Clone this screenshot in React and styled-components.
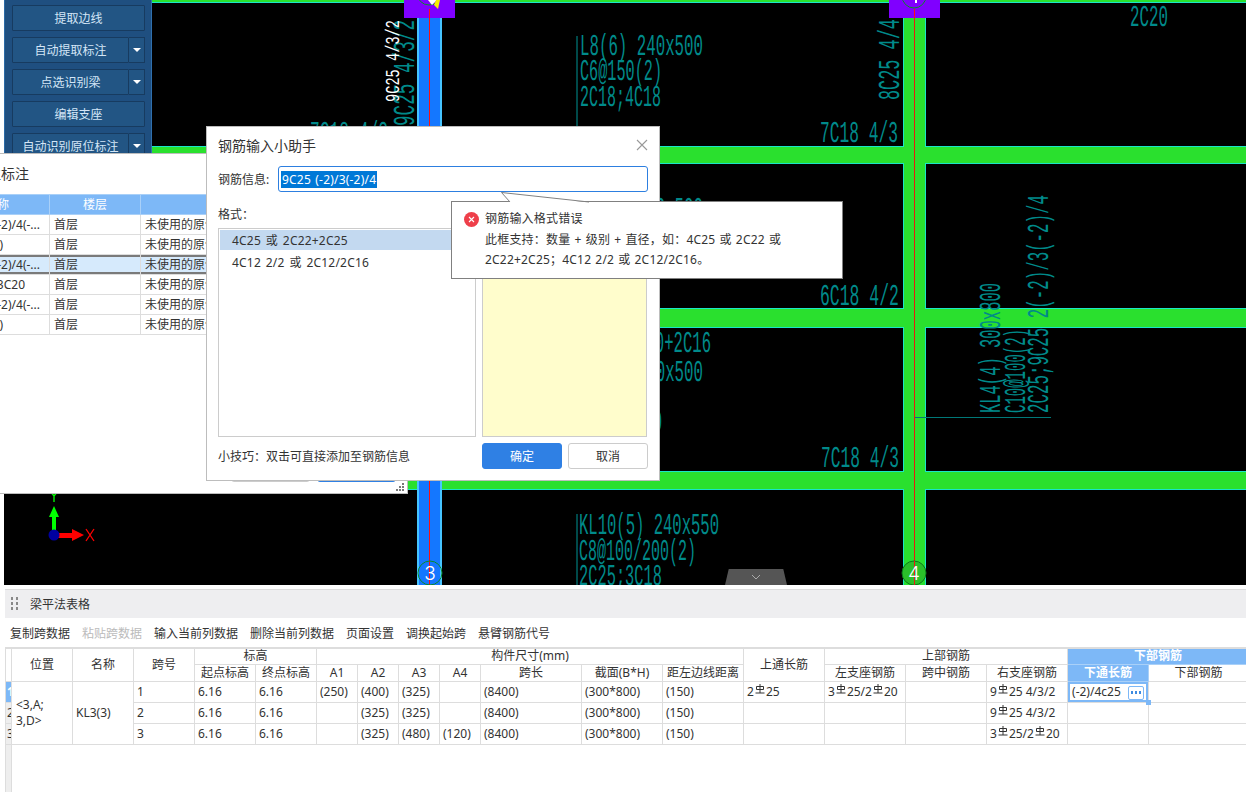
import React from 'react'
import styled, { createGlobalStyle } from 'styled-components'

const GlobalStyle = createGlobalStyle`
  html, body {
    margin: 0;
    padding: 0;
    width: 1246px;
    height: 792px;
    overflow: hidden;
    background: #fff;
    color: #333;
    font-family: "Noto Sans", "Noto Sans CJK SC", sans-serif;
    font-size: 12px;
  }
  * { box-sizing: border-box; }
`

const Page = styled.div`
  position: relative;
  width: 1246px;
  height: 792px;
  overflow: hidden;
`

/* ---------- cad canvas ---------- */

const Workspace = styled.div`
  position: relative;
  margin-left: 4px;
  height: 585px;
  background: #000;
`

const CadSvg = styled.svg`
  display: block;
`

const CadLabel = styled.text`
  font-family: "Liberation Mono", monospace;
  font-weight: 400;
  text-rendering: geometricPrecision;
  fill: ${props => props.$color || '#008a8a'};
`

const AxisNumber = styled.text`
  font-family: Inter, "Liberation Sans", sans-serif;
  font-weight: 300;
  font-size: 19px;
  fill: #fff;
  text-anchor: middle;
`

const Sidebar = styled.div`
  position: absolute;
  left: 0;
  top: 0;
  width: 148px;
  height: 153px;
  overflow: hidden;
  display: flex;
  flex-direction: column;
  gap: 6px;
  padding: 5px 6px 0 8px;
  background: #1f4f80;
  border-left: 1px solid #2b6aa6;
  border-right: 1px solid #2f6fae;
`

const SideButton = styled.div`
  display: flex;
  flex: none;
  height: 26px;
  margin-left: -1px;
`

const SideLabel = styled.div`
  flex: 1;
  display: flex;
  align-items: center;
  justify-content: center;
  background: #225584;
  border: 1px solid #173b60;
  border-radius: 1px;
  color: #d4e6f7;
  white-space: nowrap;
`

const SideCaret = styled.div`
  flex: none;
  width: 16px;
  display: flex;
  align-items: center;
  justify-content: center;
  background: #225584;
  border: 1px solid #173b60;
  border-left: none;

  &::after {
    content: '';
    border-left: 4px solid transparent;
    border-right: 4px solid transparent;
    border-top: 4px solid #fff;
  }
`

const CollapseTab = styled.div`
  position: absolute;
  left: 721px;
  bottom: 0;
  width: 62px;
  height: 16px;
  display: flex;
  align-items: center;
  justify-content: center;
  background: #555;
  clip-path: polygon(6% 0, 94% 0, 100% 100%, 0 100%);
`

/* ---------- table dialog behind ---------- */

const ListDialog = styled.div`
  position: absolute;
  left: -60px;
  top: 153px;
  width: 468px;
  height: 341px;
  display: flex;
  flex-direction: column;
  background: #fff;
  border: 1px solid #bdbdbd;
`

const ListTitle = styled.div`
  height: 40px;
  flex: none;
  padding: 0 0 3px 4px;
  display: flex;
  align-items: center;
  font-size: 14px;
`

const ListTable = styled.table`
  border-collapse: collapse;
  table-layout: fixed;
  width: 100%;
`

const ListHead = styled.th`
  height: 20px;
  padding: 0 ${props => props.$end || 0}px 1px 0;
  line-height: 17px;
  background: #7db8f7;
  color: #fff;
  font-weight: 400;
  border: 1px solid #a9d0f8;
  text-align: ${props => props.$end ? 'right' : 'center'};
`

const ListCell = styled.td`
  height: 20px;
  padding: 0 ${props => props.$end || 4}px 1px 4px;
  line-height: 17px;
  border: 1px solid #ddd;
  white-space: nowrap;
  overflow: hidden;
  text-align: ${props => props.$end ? 'right' : 'left'};
  background: ${props => props.$active ? '#d6eafc' : '#fff'};
  box-shadow: ${props => props.$active ? 'inset 0 2px #7a7a7a, inset 0 -2px #7a7a7a' : 'none'};
`

const ListFooter = styled.div`
  margin-top: auto;
  padding: 0 11px 11px 0;
  display: flex;
  justify-content: flex-end;
  gap: 7px;
`

const HiddenButton = styled.div`
  width: 79px;
  height: 26px;
  border-radius: 3px;
  background: ${props => props.$primary ? '#2f80e4' : '#fff'};
  border: 1px solid ${props => props.$primary ? '#2f80e4' : '#ccc'};
`

const Grip = styled.svg`
  position: absolute;
  right: 3px;
  bottom: 2px;
`

/* ---------- helper dialog ---------- */

const HelperDialog = styled.div`
  position: absolute;
  left: 206px;
  top: 126px;
  width: 454px;
  height: 355px;
  display: flex;
  flex-direction: column;
  padding: 0 11px;
  background: #fff;
  border: 1px solid #bdbdbd;
`

const HelperTitle = styled.div`
  flex: none;
  height: 39px;
  padding: 0 0 3px;
  display: flex;
  align-items: center;
  justify-content: space-between;
  font-size: 14px;
`

const InfoRow = styled.div`
  flex: none;
  height: 26px;
  display: flex;
  align-items: center;
`

const InfoLabel = styled.div`
  flex: none;
  width: 60px;
`

const InfoInput = styled.div`
  flex: 1;
  height: 26px;
  padding-left: 2px;
  display: flex;
  align-items: center;
  border: 1px solid #2d7fe0;
  border-radius: 3px;
`

const Selected = styled.span`
  padding: 0 1px;
  line-height: 17px;
  background: #0078d7;
  color: #fff;
  letter-spacing: 0.2px;
  word-spacing: 1px;
`

const FormatLabel = styled.div`
  flex: none;
  height: 36px;
  padding-top: 14px;
  line-height: 18px;
`

const Panes = styled.div`
  flex: none;
  height: 209px;
  display: grid;
  grid-template-columns: 258px 165px;
  gap: 6px;
`

const FormatList = styled.div`
  padding: 1px;
  border: 1px solid #ccc;
`

const FormatItem = styled.div`
  height: ${props => props.$active ? 20 : 24}px;
  padding-left: 12px;
  display: flex;
  align-items: center;
  letter-spacing: 0.2px;
  word-spacing: 1.5px;
  background: ${props => props.$active ? '#c3d9f0' : 'transparent'};
`

const NotePane = styled.div`
  background: #fffdcc;
  border: 1px solid #ccc;
`

const HelperFooter = styled.div`
  flex: none;
  margin-top: 6px;
  height: 26px;
  display: flex;
  align-items: center;
  gap: 6px;
`

const Tip = styled.div`
  flex: 1;
`

const DialogButton = styled.div`
  width: 80px;
  height: 26px;
  display: flex;
  align-items: center;
  justify-content: center;
  border-radius: 3px;
  background: ${props => props.$primary ? '#2f80e4' : '#fff'};
  color: ${props => props.$primary ? '#fff' : '#333'};
  border: 1px solid ${props => props.$primary ? '#2f80e4' : '#ccc'};
`

/* ---------- error tooltip ---------- */

const ErrorTip = styled.div`
  position: absolute;
  left: 451px;
  top: 201px;
  width: 392px;
  height: 78px;
  display: flex;
  gap: 6px;
  padding: 7px 0 0 12px;
  background: #fff;
  border: 1px solid #808080;
`

const TipArrow = styled.svg`
  position: absolute;
  left: 49px;
  top: -10px;
`

const TipIcon = styled.svg`
  flex: none;
  margin-top: 3px;
`

const TipText = styled.div`
  line-height: 20.5px;
  letter-spacing: 0.2px;
  word-spacing: 0.8px;
`

/* ---------- bottom table panel ---------- */

const TablePanel = styled.div`
  margin-left: 5px;
  padding-top: 4px;
`

const PanelHeader = styled.div`
  height: 29px;
  display: flex;
  align-items: center;
  gap: 12px;
  padding-left: 6px;
  background: #eeeef0;
  border-top: 1px solid #ddd;
`

const Toolbar = styled.div`
  height: 29px;
  display: flex;
  align-items: center;
  gap: 12px;
  padding-left: 5px;
`

const ToolItem = styled.div`
  color: ${props => props.$disabled ? '#bbb' : '#333'};
  white-space: nowrap;
`

const BeamTable = styled.table`
  border-collapse: collapse;
  table-layout: fixed;
  width: 1244px;
  border-top: 2px solid #ddd;
`

const HeadCell = styled.th`
  padding: 0;
  height: ${props => props.$short ? 16 : 17}px;
  font-weight: ${props => props.$active ? 700 : 400};
  line-height: 14px;
  border: 1px solid #ddd;
  white-space: nowrap;
  background: ${props => props.$active ? '#7db8f7' : '#fff'};
  color: ${props => props.$active ? '#fff' : '#333'};
  ${props => props.$active ? 'border-color: #a9d0f8;' : ''}
`

const RowNumber = styled.td`
  padding: 0 0 0 1px;
  overflow: hidden;
  border: 1px solid #ddd;
  background: ${props => props.$active ? '#7db8f7' : '#eee'};
  color: ${props => props.$active ? '#fff' : '#333'};
  font-weight: ${props => props.$active ? 700 : 400};
`

const DataCell = styled.td`
  height: 21px;
  padding: 0 0 0 3px;
  border: 1px solid #ddd;
  white-space: nowrap;
  overflow: hidden;
`

const MergedCell = styled(DataCell)`
  white-space: pre-line;
  line-height: 16px;
  padding-left: ${props => props.$pad || 3}px;
`

const ActiveCell = styled.td`
  position: relative;
  padding: 0 0 0 4px;
  border: 1px solid #ddd;
  box-shadow: inset 0 0 0 2px #7db8f7;
  white-space: nowrap;

  &::after {
    content: '';
    position: absolute;
    right: -3px;
    bottom: -3px;
    width: 5px;
    height: 5px;
    background: #7db8f7;
  }
`

const MoreButton = styled.span`
  position: absolute;
  right: 4px;
  top: 4px;
  width: 16px;
  height: 14px;
  display: flex;
  align-items: center;
  justify-content: center;
  gap: 1.5px;
  border: 1px solid #7db8f7;
  border-radius: 2px;
`

const MoreDot = styled.i`
  width: 2.5px;
  height: 2.5px;
  background: #3d8be0;
`

const FillerGutter = styled.td`
  height: 48px;
  padding: 0;
  background: #eee;
  border: 1px solid #ddd;
  border-bottom: none;
`

const RebarSvg = styled.svg`
  vertical-align: 2px;
  margin: 0 1px;
`

const Rebar = () => (
  <RebarSvg width="10" height="10" viewBox="0 0 10 10" fill="none" stroke="#333" strokeWidth="1">
    <path d="M5 0v9M1.5 2.5h7v3h-7zM0.5 9h9" />
  </RebarSvg>
)

const RebarText = ({ value }) => {
  const parts = value.split('*')
  return parts.map((part, i) => (
    <React.Fragment key={i}>
      {i > 0 && <Rebar />}
      {part}
    </React.Fragment>
  ))
}

/* ---------- data ---------- */

const SIDE_BUTTONS = [
  { label: '提取边线' },
  { label: '自动提取标注', caret: true },
  { label: '点选识别梁', caret: true },
  { label: '编辑支座' },
  { label: '自动识别原位标注', caret: true },
]

const ISSUES = [
  { name: '(-2)/3(-2)/4(-...', end: 9 },
  { name: '(2C20)', end: 46 },
  { name: '(-2)/3(-2)/4(-...', end: 9, active: true },
  { name: '2C25;3C20', end: 24 },
  { name: '(-2)/3(-2)/4(-...', end: 9 },
  { name: '(2C20)', end: 46 },
]

const TOOLS = ['复制跨数据', '粘贴跨数据', '输入当前列数据', '删除当前列数据', '页面设置', '调换起始跨', '悬臂钢筋代号']

const COLUMN_WIDTHS = [6, 61, 61, 61, 61, 61, 41, 41, 41, 41, 101, 81, 81, 81, 81, 81, 81, 81, 100]

const SPANS = [
  { no: 1, from: '6.16', to: '6.16', a: ['(250)', '(400)', '(325)', ''], top: '2*25', left: '3*25/2*20', right: '9*25 4/3/2' },
  { no: 2, from: '6.16', to: '6.16', a: ['', '(325)', '(325)', ''], top: '', left: '', right: '9*25 4/3/2' },
  { no: 3, from: '6.16', to: '6.16', a: ['', '(325)', '(480)', '(120)'], top: '', left: '', right: '3*25/2*20' },
]

const LABELS = [
  { t: '7C18 4/3', x: 310, y: 142, len: 78 },
  { t: 'L8(6) 240x500', x: 580, y: 55, len: 123 },
  { t: 'C6@150(2)', x: 580, y: 80, len: 82 },
  { t: '2C18;4C18', x: 580, y: 106, len: 81 },
  { t: '2C20', x: 1130, y: 26, len: 38 },
  { t: '7C18 4/3', x: 820, y: 142, len: 78 },
  { t: '6C18 4/2', x: 820, y: 305, len: 79 },
  { t: '7C18 4/3', x: 821, y: 467, len: 78 },
  { t: 'L8(4) 240x500', x: 580, y: 218, len: 123 },
  { t: '2C20;4C20+2C16', x: 580, y: 352, len: 131 },
  { t: 'L8(6) 240x500', x: 580, y: 381, len: 123 },
  { t: 'C8@100(2)', x: 580, y: 406, len: 82 },
  { t: '2C18;4C20', x: 580, y: 431, len: 82 },
  { t: 'KL10(5) 240x550', x: 579, y: 534, len: 140 },
  { t: 'C8@100/200(2)', x: 579, y: 560, len: 117 },
  { t: '2C25;3C18', x: 579, y: 585, len: 83 },
  { t: '9C25 4/3/2', x: 414, y: 126, len: 106, rot: true },
  { t: '9C25 4/3/2', x: 399, y: 102, len: 82, h: 13, color: '#fff' },
  { t: '8C25 4/4', x: 899, y: 100, len: 81, rot: true },
  { t: 'KL4(4) 300x800', x: 1000, y: 413, len: 130, rot: true },
  { t: 'C10@100(2)', x: 1025, y: 413, len: 84, rot: true },
  { t: '2C25;9C25 2(-2)/3(-2)/4', x: 1048, y: 413, len: 218, rot: true },
]

const H_BEAMS = [
  { y: -2, h: 5, x: 152 },
  { y: 146, h: 18, x: 152 },
  { y: 308, h: 20, x: 442 },
  { y: 471, h: 19, x: 152 },
]

const Drawing = () => (
  <CadSvg width="1242" height="585" viewBox="4 0 1242 585">
    {H_BEAMS.map(b => (
      <rect key={b.y} x={b.x} y={b.y} width={1246 - b.x} height={b.h} fill="#19e6c8" />
    ))}
    <rect x="903" y="0" width="23" height="585" fill="#19e6c8" />
    {H_BEAMS.map(b => (
      <rect key={b.y} x={b.x} y={b.y + 1} width={1246 - b.x} height={b.h - 2} fill="#2ae02e" />
    ))}
    <rect x="904" y="0" width="21" height="585" fill="#2ae02e" />

    <rect x="417" y="0" width="25" height="585" fill="#46c4ff" />
    <rect x="419" y="0" width="21" height="585" fill="#1477ff" />
    <rect x="429" y="17" width="1" height="568" fill="#ff1010" />
    <rect x="914" y="17" width="1" height="568" fill="#e81a10" />

    <path d="M577 36v90M577 514v71" stroke="#006a6a" strokeWidth="1.4" fill="none" />
    <path d="M915 417.5h136" stroke="#007878" strokeWidth="1" fill="none" />

    {LABELS.map(l => {
      const h = l.h || 20
      return (
        <CadLabel
          key={`${l.t}${l.x}${l.y}`}
          x={l.x}
          y={l.y}
          $color={l.color}
          fontSize={h / 0.66}
          textLength={l.len}
          lengthAdjust="spacingAndGlyphs"
          transform={l.rot || l.color ? `rotate(-90 ${l.x} ${l.y})` : undefined}
        >
          {l.t}
        </CadLabel>
      )
    })}

    <rect x="404" y="0" width="51" height="18" fill="#8000ff" />
    <rect x="889" y="0" width="51" height="18" fill="#8000ff" />
    <circle cx="429" cy="-7" r="12" fill="none" stroke="#0a8a2a" />
    <path d="M428 0h9l-5 5z" fill="#fff" />
    <path d="M436 0h4l-2 9-4-4z" fill="#f7f000" />
    <circle cx="914" cy="-4" r="12" fill="none" stroke="#0a8a2a" />
    <rect x="915" y="0" width="2" height="3" fill="#fff" />
    <rect x="429" y="9" width="1" height="9" fill="#ff1010" />
    <rect x="914" y="9" width="1" height="9" fill="#ff1010" />

    <circle cx="430" cy="573" r="12" fill="none" stroke="#0a8a2a" />
    <AxisNumber x="430" y="580">3</AxisNumber>
    <circle cx="914" cy="573" r="12" fill="#2ac02a" stroke="#0a7a1a" />
    <rect x="914" y="561" width="1" height="24" fill="#e81a10" />
    <AxisNumber x="914" y="580">4</AxisNumber>

    <rect x="52" y="516" width="4" height="16" fill="#00ff00" />
    <path d="M54 506l5 11h-10z" fill="#00ff00" />
    <path d="M49 490l5 6 5-6M54 496v6" stroke="#00ff00" strokeWidth="1.3" fill="none" />
    <rect x="58" y="533" width="15" height="5" fill="#ff0000" />
    <path d="M84 535l-12-6v12z" fill="#ff0000" />
    <path d="M86 529l8 12M94 529l-8 12" stroke="#ff0000" strokeWidth="1.3" fill="none" />
    <circle cx="54" cy="535" r="5.5" fill="#0000a0" />
  </CadSvg>
)

const App = () => (
  <Page>
    <GlobalStyle />

    <Workspace>
      <Drawing />
      <Sidebar>
        {SIDE_BUTTONS.map(b => (
          <SideButton key={b.label}>
            <SideLabel>{b.label}</SideLabel>
            {b.caret && <SideCaret />}
          </SideButton>
        ))}
      </Sidebar>
      <CollapseTab>
        <svg width="10" height="6" viewBox="0 0 10 6" fill="none" stroke="#aaa" strokeWidth="1">
          <path d="M1 1l4 4 4-4" />
        </svg>
      </CollapseTab>
    </Workspace>

    <TablePanel>
      <PanelHeader>
        <svg width="7" height="14" viewBox="0 0 7 14" fill="#888">
          {[0, 5, 10].map(y => (
            <React.Fragment key={y}>
              <rect x="0" y={y} width="2" height="3" />
              <rect x="5" y={y} width="2" height="3" />
            </React.Fragment>
          ))}
        </svg>
        梁平法表格
      </PanelHeader>
      <Toolbar>
        {TOOLS.map((tool, i) => (
          <ToolItem key={tool} $disabled={i === 1}>{tool}</ToolItem>
        ))}
      </Toolbar>
      <BeamTable>
        <colgroup>
          {COLUMN_WIDTHS.map((w, i) => <col key={i} width={w} />)}
        </colgroup>
        <thead>
          <tr>
            <HeadCell $short rowSpan={2} />
            <HeadCell $short rowSpan={2}>位置</HeadCell>
            <HeadCell $short rowSpan={2}>名称</HeadCell>
            <HeadCell $short rowSpan={2}>跨号</HeadCell>
            <HeadCell $short colSpan={2}>标高</HeadCell>
            <HeadCell $short colSpan={7}>构件尺寸(mm)</HeadCell>
            <HeadCell $short rowSpan={2}>上通长筋</HeadCell>
            <HeadCell $short colSpan={3}>上部钢筋</HeadCell>
            <HeadCell $short colSpan={2} $active>下部钢筋</HeadCell>
          </tr>
          <tr>
            {['起点标高', '终点标高', 'A1', 'A2', 'A3', 'A4', '跨长', '截面(B*H)', '距左边线距离', '左支座钢筋', '跨中钢筋', '右支座钢筋'].map(h => (
              <HeadCell key={h}>{h}</HeadCell>
            ))}
            <HeadCell $active>下通长筋</HeadCell>
            <HeadCell>下部钢筋</HeadCell>
          </tr>
        </thead>
        <tbody>
          {SPANS.map((span, i) => (
            <tr key={span.no}>
              <RowNumber $active={i === 0}>{span.no}</RowNumber>
              {i === 0 && <MergedCell rowSpan={3} $pad={4}>{'<3,A;\n3,D>'}</MergedCell>}
              {i === 0 && <MergedCell rowSpan={3}>KL3(3)</MergedCell>}
              <DataCell>{span.no}</DataCell>
              <DataCell>{span.from}</DataCell>
              <DataCell>{span.to}</DataCell>
              {span.a.map((v, j) => <DataCell key={j}>{v}</DataCell>)}
              <DataCell>(8400)</DataCell>
              <DataCell>(300*800)</DataCell>
              <DataCell>(150)</DataCell>
              <DataCell><RebarText value={span.top} /></DataCell>
              <DataCell><RebarText value={span.left} /></DataCell>
              <DataCell />
              <DataCell><RebarText value={span.right} /></DataCell>
              {i === 0 ? (
                <ActiveCell>
                  (-2)/4c25
                  <MoreButton><MoreDot /><MoreDot /><MoreDot /></MoreButton>
                </ActiveCell>
              ) : <DataCell />}
              <DataCell />
            </tr>
          ))}
          <tr><FillerGutter /></tr>
        </tbody>
      </BeamTable>
    </TablePanel>

    <ListDialog>
      <ListTitle>校核原位标注</ListTitle>
      <ListTable>
        <colgroup>
          <col width="108" />
          <col width="91" />
          <col />
        </colgroup>
        <thead>
          <tr>
            <ListHead $end={40}>名称</ListHead>
            <ListHead>楼层</ListHead>
            <ListHead />
          </tr>
        </thead>
        <tbody>
          {ISSUES.map((row, i) => (
            <tr key={i}>
              <ListCell $end={row.end} $active={row.active}>{row.name}</ListCell>
              <ListCell $active={row.active}>首层</ListCell>
              <ListCell $active={row.active}>未使用的原位标注</ListCell>
            </tr>
          ))}
        </tbody>
      </ListTable>
      <ListFooter>
        <HiddenButton />
        <HiddenButton $primary />
      </ListFooter>
      <Grip width="8" height="8" viewBox="0 0 8 8" fill="#777">
        <rect x="6" y="0" width="2" height="2" />
        <rect x="3" y="3" width="2" height="2" />
        <rect x="6" y="3" width="2" height="2" />
        <rect x="0" y="6" width="2" height="2" />
        <rect x="3" y="6" width="2" height="2" />
        <rect x="6" y="6" width="2" height="2" />
      </Grip>
    </ListDialog>

    <HelperDialog>
      <HelperTitle>
        钢筋输入小助手
        <svg width="12" height="12" viewBox="0 0 12 12" stroke="#999" strokeWidth="1.1" fill="none">
          <path d="M1 1l10 10M11 1L1 11" />
        </svg>
      </HelperTitle>
      <InfoRow>
        <InfoLabel>钢筋信息:</InfoLabel>
        <InfoInput><Selected>9C25 (-2)/3(-2)/4</Selected></InfoInput>
      </InfoRow>
      <FormatLabel>格式：</FormatLabel>
      <Panes>
        <FormatList>
          <FormatItem $active>4C25 或 2C22+2C25</FormatItem>
          <FormatItem>4C12 2/2 或 2C12/2C16</FormatItem>
        </FormatList>
        <NotePane />
      </Panes>
      <HelperFooter>
        <Tip>小技巧：双击可直接添加至钢筋信息</Tip>
        <DialogButton $primary>确定</DialogButton>
        <DialogButton>取消</DialogButton>
      </HelperFooter>
    </HelperDialog>

    <ErrorTip>
      <TipArrow width="90" height="11" viewBox="0 0 90 11">
        <path d="M0.5 0.5L9 10.5H88Z" fill="#fff" />
        <path d="M0.5 0.5L9 10M0.5 0.5L88 10" stroke="#808080" fill="none" />
      </TipArrow>
      <TipIcon width="15" height="15" viewBox="0 0 15 15">
        <circle cx="7.5" cy="7.5" r="7.5" fill="#ee3f4a" />
        <path d="M5 5l5 5M10 5l-5 5" stroke="#fff" strokeWidth="1.1" fill="none" />
      </TipIcon>
      <TipText>
        钢筋输入格式错误<br />
        此框支持：数量 + 级别 + 直径，如：4C25 或 2C22 或<br />
        2C22+2C25；4C12 2/2 或 2C12/2C16。
      </TipText>
    </ErrorTip>
  </Page>
)

export default App
